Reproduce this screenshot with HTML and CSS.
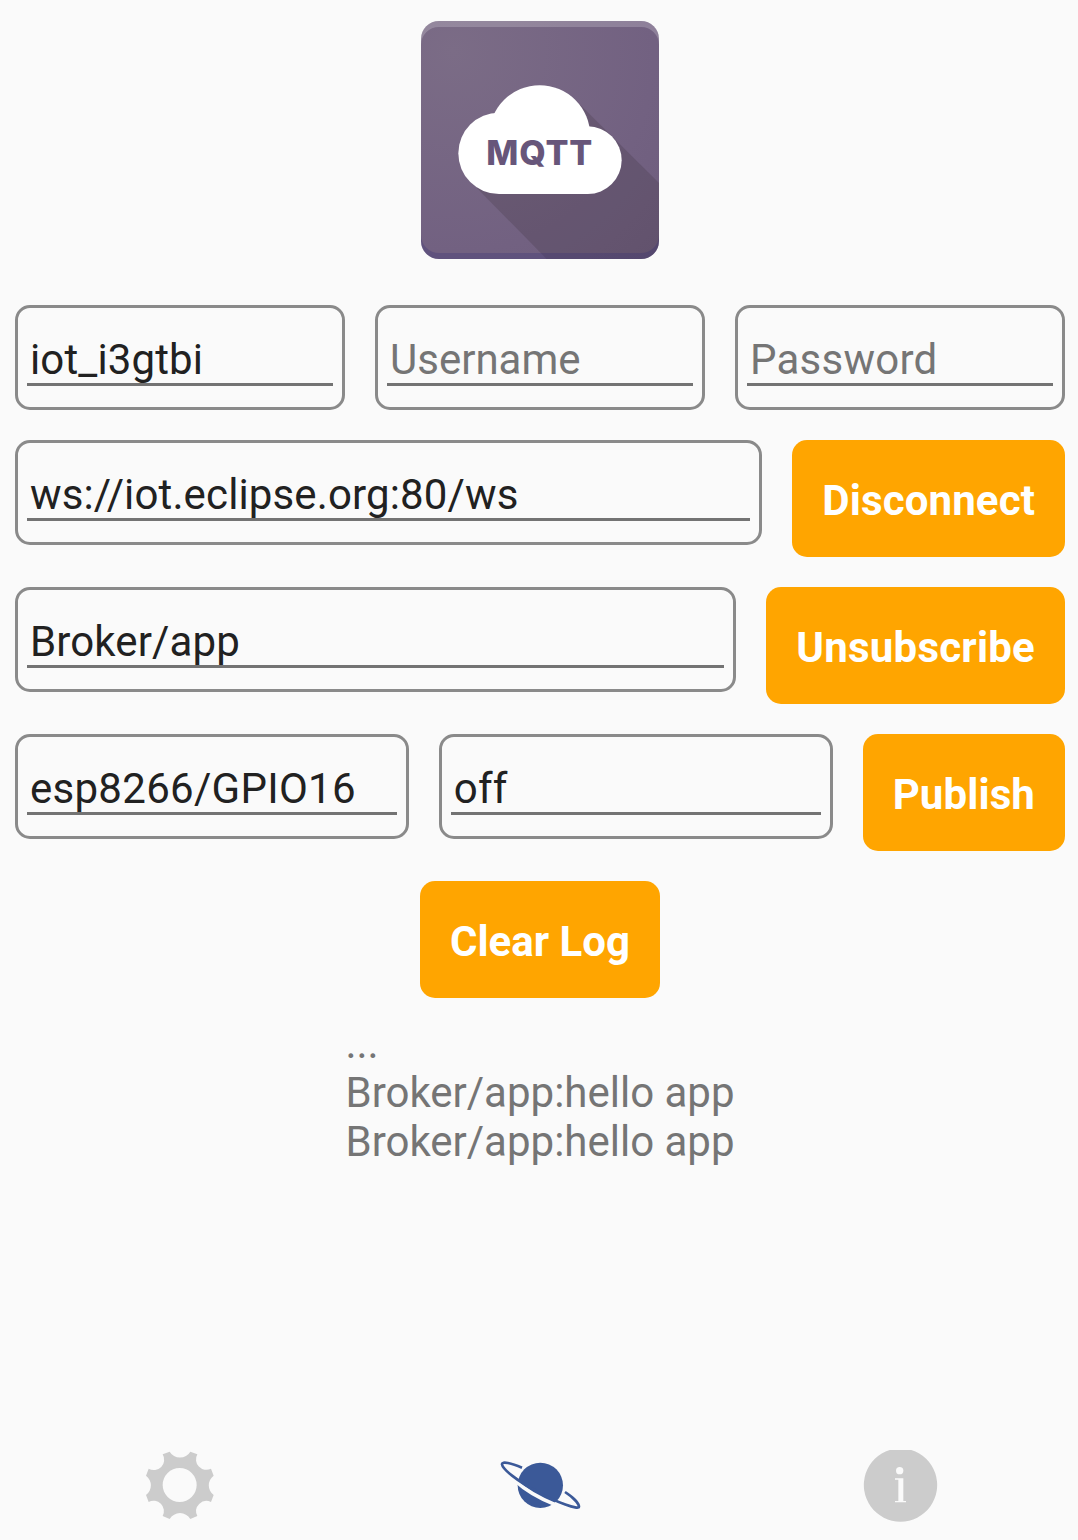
FILE: index.html
```html
<!DOCTYPE html>
<html lang="en">
<head>
<meta charset="utf-8">
<title>MQTT</title>
<link rel="stylesheet" href="styles.css">
</head>
<body>
<div class="app">
  <header class="header">
    <svg class="logo" viewBox="33 33 714 714" role="img" aria-label="MQTT">
      <defs>
        <radialGradient id="tile" gradientUnits="userSpaceOnUse" cx="130" cy="125" r="860">
          <stop offset="0" stop-color="#7b6c86"/>
          <stop offset="0.7" stop-color="#726181"/>
          <stop offset="1" stop-color="#6e5d7d"/>
        </radialGradient>
        <clipPath id="tile-clip"><rect x="33" y="33" width="714" height="714" rx="54"/></clipPath>
      </defs>
      <g clip-path="url(#tile-clip)">
        <rect x="33" y="33" width="714" height="714" fill="url(#tile)"/>
        <path d="M200 533L496 270L747 519V747H410Z" fill="#40353f" fill-opacity=".25"/>
        <path d="M33 33H747V105A54 54 0 0 0 693 51H87A54 54 0 0 0 33 105Z" fill="#fff" fill-opacity=".2"/>
        <path d="M33 747H747V675A54 54 0 0 1 693 729H87A54 54 0 0 1 33 675Z" fill="#2b2773" fill-opacity=".25"/>
      </g>
      <g fill="#fff">
        <circle cx="267" cy="430" r="122"/>
        <circle cx="389" cy="377" r="151.500"/>
        <circle cx="533.500" cy="450.500" r="101.500"/>
        <path d="M267 430H533V552H267Z"/>
      </g>
      <text class="logo-text" x="229" y="464" textLength="318">MQTT</text>
    </svg>
  </header>

  <main class="form">
    <div class="row">
      <label class="field"><input class="input" type="text" value="iot_i3gtbi" spellcheck="false"></label>
      <label class="field"><input class="input" type="text" placeholder="Username"></label>
      <label class="field"><input class="input input-password" type="text" placeholder="Password"></label>
    </div>
    <div class="row">
      <label class="field"><input class="input" type="text" value="ws://iot.eclipse.org:80/ws" spellcheck="false"></label>
      <button class="button">Disconnect</button>
    </div>
    <div class="row">
      <label class="field"><input class="input" type="text" value="Broker/app" spellcheck="false"></label>
      <button class="button button-wide">Unsubscribe</button>
    </div>
    <div class="row">
      <label class="field"><input class="input input-topic" type="text" value="esp8266/GPIO16" spellcheck="false"></label>
      <label class="field"><input class="input" type="text" value="off" spellcheck="false"></label>
      <button class="button">Publish</button>
    </div>
    <button class="button button-center">Clear Log</button>
    <div class="log">
      <div>...</div>
      <div>Broker/app:hello app</div>
      <div>Broker/app:hello app</div>
    </div>
  </main>

  <nav class="tabs">
    <a class="tab"><svg class="icon" viewBox="0 -15 300 300"><path fill="#ccc" fill-rule="evenodd" d="M98 43L119 35A36 36 0 0 0 181 35L202 43A31 31 0 0 0 243 86L251 107A36 36 0 0 0 251 165L243 186A31 31 0 0 0 202 228L181 237A36 36 0 0 0 119 237L98 228A31 31 0 0 0 56 186L48 165A36 36 0 0 0 48 107L56 86A31 31 0 0 0 98 43ZM149 84A51 51 0 1 0 149 186A51 51 0 1 0 149 84Z"/></svg></a>
    <a class="tab"><svg class="icon" viewBox="0 -15 300 300"><circle cx="151" cy="136" r="68" fill="#3b5998"/><path d="M78 124Q120 163 194 193" fill="none" stroke="#fafafa" stroke-width="11"/><path d="M96 83C65 70 35 62 36 73C38 88 80 121 140 154C200 187 267 211 267 200C267 190 248 171 225 156" fill="none" stroke="#3b5998" stroke-width="8"/></svg></a>
    <a class="tab"><svg class="icon" viewBox="0 -15 300 300"><path d="M119 30H184A110 110 0 1 1 119 30Z" fill="#ccc"/><circle cx="149" cy="92" r="11" fill="#fafafa"/><path d="M135 115H160V183H168V187H135V183H145V119H135Z" fill="#fafafa"/></svg></a>
  </nav>
</div>
</body>
</html>
```
FILE: styles.css
```css
* { box-sizing: border-box; }

body {
  margin: 0;
  overflow: hidden;
  background: #fafafa;
  font-family: Roboto, "Liberation Sans", sans-serif;
  font-size: 42px;
  line-height: 49px;
}

.app {
  display: flex;
  flex-direction: column;
  width: 1080px;
  height: 1540px;
}

.header {
  display: flex;
  justify-content: center;
  padding: 21px 0 46px;
}

.logo { width: 238px; height: 238px; }

.logo-text {
  fill: #67567a;
  font: 800 102px Inter, sans-serif;
}

.form {
  display: flex;
  flex: 1;
  flex-direction: column;
  gap: 30px;
  padding: 0 15px;
}

.row {
  display: flex;
  align-items: flex-start;
  gap: 30px;
}

.field {
  display: flex;
  flex: 1 1 0;
  min-width: 0;
  height: 105px;
  padding: 27px 9px 21px;
  border: 3px solid #8a8a8a;
  border-radius: 15px;
}

.input {
  width: 100%;
  height: 51px;
  padding: 0 3px;
  border: 0;
  border-bottom: 3px solid #737373;
  border-radius: 0;
  outline: 0;
  background: transparent;
  color: #212121;
  font: inherit;
  letter-spacing: 0.13px;
}

.input::placeholder { color: #757575; opacity: 1; letter-spacing: 0; }
.input-password::placeholder { letter-spacing: 0.25px; }
.input-topic { letter-spacing: 0.28px; }

.button {
  height: 117px;
  padding: 4px 30px 0;
  border: 0;
  border-radius: 15px;
  background: #ffa500;
  color: #fff;
  font: inherit;
  font-weight: 700;
  letter-spacing: 0.12px;
}

.button-wide { letter-spacing: 0.22px; }

.button-center {
  align-self: center;
  letter-spacing: 0;
}

.log {
  align-self: center;
  margin-top: -9px;
  color: #757575;
}

.tabs {
  display: grid;
  grid-template-columns: repeat(3, 1fr);
  height: 105px;
}

.tab {
  display: flex;
  justify-content: center;
}

.icon { width: 100px; height: 100px; }
```
